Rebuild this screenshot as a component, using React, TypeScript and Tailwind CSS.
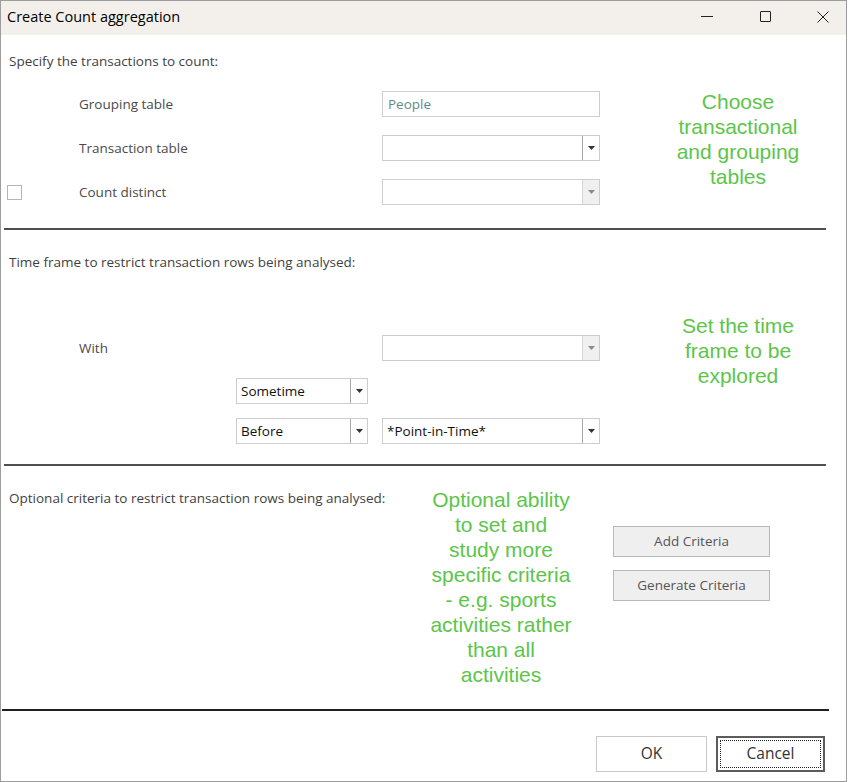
import React from 'react';

// small down-arrow used by every combo box
const Caret: React.FC<{ muted?: boolean }> = ({ muted }) => (
  <svg width="7" height="4" viewBox="0 0 7 4">
    <path d="M0 0h7L3.5 4z" fill={muted ? '#8a8a8a' : '#333'} />
  </svg>
);

interface ComboProps {
  width: string;
  value?: string;
  disabled?: boolean;
}

const Combo: React.FC<ComboProps> = ({ width, value, disabled }) => (
  <div className={`${width} h-[26px] flex border border-[#cdcdcd] bg-white`}>
    <div className="flex-1 flex items-center pl-[4px] text-[13.5px] text-[#111]">{value}</div>
    <div
      className={`w-[17px] flex items-center justify-center border-l ${
        disabled ? 'border-[#d8d8d8] bg-[#f0f0f0]' : 'border-[#a8a8a8] bg-white'
      }`}
    >
      <Caret muted={disabled} />
    </div>
  </div>
);

const Row: React.FC<{ label: string; children: React.ReactNode; check?: boolean }> = ({ label, children, check }) => (
  <div className="flex items-center h-[26px]">
    <div className="w-[70px] flex items-center">
      {check && <div className="ml-[-2px] w-[15px] h-[15px] border border-[#b5b5b5] bg-white" />}
    </div>
    <div className="w-[303px] text-[13.5px] text-[#4a4a4a]">{label}</div>
    {children}
  </div>
);

const Note: React.FC<{ children: React.ReactNode }> = ({ children }) => (
  <p className="font-['Liberation_Sans',Arial,sans-serif] text-[21px] leading-[25px] text-[#5cc54a] text-center">{children}</p>
);

const Separator: React.FC<{ className: string }> = ({ className }) => <div className={className} />;

export default function App() {
  return (
    <div className="w-[853px] h-[782px] bg-white font-['Open_Sans','Noto_Sans',sans-serif]">
      <div className="w-[847px] h-[782px] flex flex-col border border-[#9d9d9d] bg-white">
        {/* title bar */}
        <div className="h-[34px] shrink-0 flex items-center bg-[#f3f0ec] pl-[6px] pb-[3px]">
          <span className="flex-1 text-[14.5px] text-black">Create Count aggregation</span>
          <div className="flex items-center gap-[12px]">
            <div className="w-[46px] flex justify-center">
              <div className="w-[12px] h-px bg-[#222]" />
            </div>
            <div className="w-[46px] flex justify-center">
              <div className="w-[11px] h-[11px] border border-[#222] rounded-[1px]" />
            </div>
            <div className="w-[46px] flex justify-center">
              <svg width="12" height="12" viewBox="0 0 12 12">
                <path d="M0.5 0.5l11 11M11.5 0.5l-11 11" stroke="#222" strokeWidth="1" />
              </svg>
            </div>
          </div>
        </div>

        {/* section 1 */}
        <div className="h-[193px] shrink-0 flex">
          <div className="w-[629px] pl-[8px] pt-[18px]">
            <p className="h-[16px] leading-[16px] text-[13.5px] text-[#3f3f3f]">Specify the transactions to count:</p>
            <div className="mt-[22px] flex flex-col gap-[18px]">
              <Row label="Grouping table">
                <div className="w-[218px] h-[26px] border border-[#cdcdcd] flex items-center pl-[5px] text-[13.5px] text-[#5f8a88]">
                  People
                </div>
              </Row>
              <Row label="Transaction table">
                <Combo width="w-[218px]" />
              </Row>
              <Row label="Count distinct" check>
                <Combo width="w-[218px]" disabled />
              </Row>
            </div>
          </div>
          <div className="flex-1 pt-[54px]">
            <Note>
              Choose
              <br />
              transactional
              <br />
              and grouping
              <br />
              tables
            </Note>
          </div>
        </div>
        <Separator className="h-[2px] w-[822px] ml-[3px] bg-[#4f4f4f] shrink-0" />

        {/* section 2 */}
        <div className="h-[234px] shrink-0 flex">
          <div className="w-[629px] pl-[8px] pt-[24px]">
            <p className="h-[16px] leading-[16px] text-[13.5px] text-[#3f3f3f]">
              Time frame to restrict transaction rows being analysed:
            </p>
            <div className="mt-[65px]">
              <Row label="With">
                <Combo width="w-[218px]" disabled />
              </Row>
            </div>
            <div className="mt-[17px] ml-[227px] flex flex-col gap-[14px]">
              <Combo width="w-[132px]" value="Sometime" />
              <div className="flex gap-[14px]">
                <Combo width="w-[132px]" value="Before" />
                <Combo width="w-[218px]" value="*Point-in-Time*" />
              </div>
            </div>
          </div>
          <div className="flex-1 pt-[83px]">
            <Note>
              Set the time
              <br />
              frame to be
              <br />
              explored
            </Note>
          </div>
        </div>
        <Separator className="h-[2px] w-[822px] ml-[3px] bg-[#4f4f4f] shrink-0" />

        {/* section 3 */}
        <div className="h-[243px] shrink-0 flex">
          <div className="w-[419px] pl-[8px] pt-[24px]">
            <p className="h-[16px] leading-[16px] text-[13.5px] text-[#3f3f3f]">
              Optional criteria to restrict transaction rows being analysed:
            </p>
          </div>
          <div className="w-[162px] pt-[21px]">
            <Note>
              Optional ability
              <br />
              to set and
              <br />
              study more
              <br />
              specific criteria
              <br />
              - e.g. sports
              <br />
              activities rather
              <br />
              than all
              <br />
              activities
            </Note>
          </div>
          <div className="ml-[31px] pt-[60px] flex flex-col gap-[13px]">
            <button className="w-[157px] h-[31px] bg-[#efefef] border border-[#b9b9b9] text-[13.5px] text-[#555]">
              Add Criteria
            </button>
            <button className="w-[157px] h-[31px] bg-[#efefef] border border-[#b9b9b9] text-[13.5px] text-[#555]">
              Generate Criteria
            </button>
          </div>
        </div>
        <Separator className="h-[2px] w-[827px] ml-px bg-[#1f1f1f] shrink-0" />

        {/* footer */}
        <div className="flex-1 flex justify-end items-start pt-[25px] pr-[21px] gap-[9px]">
          <button className="w-[111px] h-[36px] bg-white border border-[#c9c9c9] text-[15.5px] text-[#333]">OK</button>
          <button className="w-[109px] h-[36px] bg-white border-2 border-[#5c5c5c] text-[15.5px] text-[#333] outline-1 outline-dotted outline-[#222] outline-offset-[-5px]">
            Cancel
          </button>
        </div>
      </div>
    </div>
  );
}
